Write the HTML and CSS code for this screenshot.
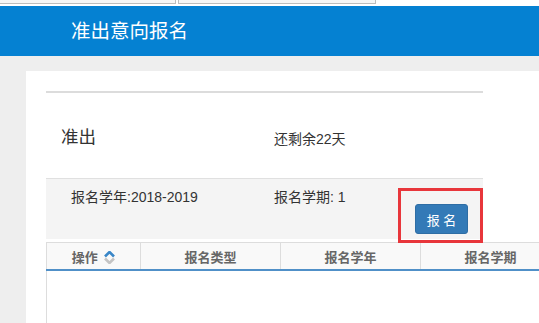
FILE: index.html
```html
<!DOCTYPE html>
<html lang="zh-CN">
<head>
    <meta charset="UTF-8">
    <meta name="viewport" content="width=device-width, initial-scale=1.0">
    <title>准出意向报名</title>
    <link rel="stylesheet" href="styles.css">
</head>
<body>
    <div class="topbar">
        <div class="tab tab-one"></div>
        <div class="tab tab-two"></div>
    </div>
    <div class="header">准出意向报名</div>

    <div class="main">
        <div class="panel">
            <div class="rule"></div>

            <div class="summary">
                <div class="summary-title">准出</div>
                <div class="summary-left">还剩余22天</div>
            </div>

            <div class="apply">
                <div class="apply-year">报名学年:2018-2019</div>
                <div class="apply-term">报名学期: 1</div>
                <button class="btn-apply">报 名</button>
                <div class="mark"></div>
            </div>

            <table class="grid">
                <thead>
                    <tr>
                        <th class="col-op">操作
                            <svg class="sort" width="11" height="13" viewBox="0 0 11 13">
                                <path d="M1 5.5 L5.5 1 L10 5.5" fill="none" stroke="#3a87c8" stroke-width="2.6"/>
                                <path d="M1 7.5 L5.5 12 L10 7.5" fill="none" stroke="#c4c4c4" stroke-width="2.6"/>
                            </svg>
                        </th>
                        <th>报名类型</th>
                        <th>报名学年</th>
                        <th>报名学期</th>
                    </tr>
                </thead>
                <tbody>
                    <tr class="empty"><td colspan="4"></td></tr>
                </tbody>
            </table>
        </div>
    </div>
</body>
</html>
```

FILE: styles.css
```css
body {
    margin: 0;
    background-color: #eeeeee;
    font-family: "Liberation Sans", "Noto Sans CJK SC", sans-serif;
    color: #333;
    overflow: hidden;
}

.topbar {
    height: 6px;
    background: #fff;
    position: relative;
    overflow: hidden;
}

.tab {
    position: absolute;
    top: -10px;
    height: 12px;
    border: 1px solid #bdbdbd;
    background: #f6f6f6;
}

.tab-one {
    left: -2px;
    width: 176px;
}

.tab-two {
    left: 178px;
    width: 196px;
}

.header {
    height: 50px;
    line-height: 50px;
    background-color: #0581d2;
    color: #fff;
    font-size: 19.5px;
    padding-left: 71px;
}

.main {
    padding: 15px 0 0 26px;
}

.panel {
    background: #fff;
    padding: 20px 0 0 20px;
    height: 300px;
}

.rule {
    width: 437px;
    height: 2px;
    background: #dcdcdc;
}

.summary {
    display: flex;
    align-items: center;
    height: 85px;
}

.summary-title {
    font-size: 17.5px;
    width: 213px;
    padding-left: 15px;
}

.summary-left {
    font-size: 14px;
    padding-top: 4px;
}

.apply {
    position: relative;
    display: flex;
    width: 412px;
    height: 60px;
    padding-left: 25px;
    border-top: 1px solid #e0e0e0;
    background: #f4f4f4;
    font-size: 14px;
    margin-bottom: 3px;
}

.apply-year {
    width: 203px;
    padding-top: 7px;
}

.apply-term {
    width: 141px;
    padding-top: 7px;
}

.btn-apply {
    margin-top: 25px;
    width: 53px;
    height: 30px;
    padding: 0;
    background-color: #337ab7;
    border: 1px solid #2e6da4;
    border-radius: 3px;
    color: #fff;
    font-family: "Liberation Sans", "Noto Sans CJK SC", sans-serif;
    font-size: 13px;
}

.mark {
    position: absolute;
    left: 352px;
    top: 9px;
    width: 85px;
    height: 55px;
    box-sizing: border-box;
    border: 3px solid #e8363b;
}

.grid {
    border-collapse: collapse;
    table-layout: fixed;
    width: 510px;
}

.grid th {
    height: 26px;
    padding: 0;
    background: #f9f9f9;
    border: 1px solid #dddddd;
    border-bottom: 2px solid #5090c8;
    color: #666;
    font-size: 13px;
    font-weight: bold;
    width: 139px;
}

.grid th.col-op {
    width: 93px;
}

.sort {
    vertical-align: -2px;
    margin-left: 3px;
}

.grid td {
    height: 60px;
    border-left: 1px solid #dddddd;
}
```
